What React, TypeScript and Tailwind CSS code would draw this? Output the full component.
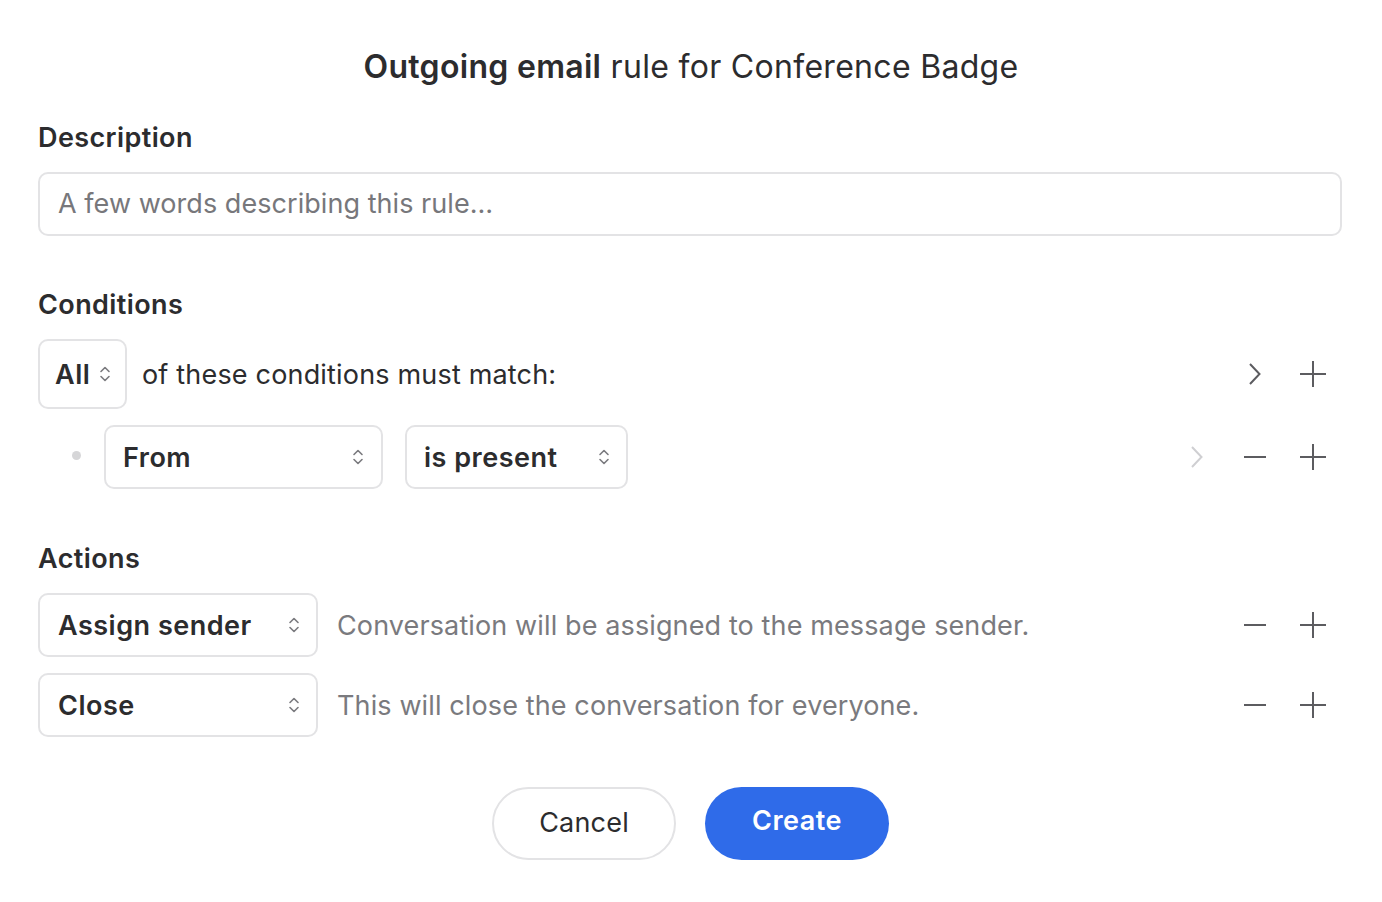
import React from "react";

const UpDown: React.FC = () => (
	<svg width="12" height="20" viewBox="0 0 12 20" fill="none" stroke="#7a7a7e" strokeWidth="1.6" strokeLinecap="round" strokeLinejoin="round">
		<path d="M2 7.5 L6 3.5 L10 7.5" />
		<path d="M2 12.5 L6 16.5 L10 12.5" />
	</svg>
);

const Chevron: React.FC<{ light?: boolean }> = ({ light }) => (
	<svg width="16" height="24" viewBox="0 0 16 24" fill="none" stroke={light ? "#cfcfd2" : "#5c5c60"} strokeWidth="2">
		<path d="M3 2 L12.5 12 L3 22" />
	</svg>
);

const Plus: React.FC = () => (
	<svg width="26" height="26" viewBox="0 0 26 26" fill="none" stroke="#5c5c60" strokeWidth="2">
		<path d="M0 13 H26 M13 0 V26" />
	</svg>
);

const Minus: React.FC = () => (
	<svg width="24" height="4" viewBox="0 0 24 4" fill="none" stroke="#5c5c60" strokeWidth="2">
		<path d="M1 2 H23" />
	</svg>
);

const Cell: React.FC<{ children?: React.ReactNode }> = ({ children }) => (
	<div className="w-[58px] flex items-center justify-center">{children}</div>
);

const Select: React.FC<{ label: string; className: string }> = ({ label, className }) => (
	<div
		className={`flex items-center justify-between border-2 border-[#e3e3e5] rounded-[10px] font-semibold text-[27px] tracking-[0.5px] text-[#2c2c2e] ${className}`}
	>
		<span className="pt-[3px]">{label}</span>
		<UpDown />
	</div>
);

export default function App() {
	return (
		<div
			className="w-[1382px] h-[902px] bg-white pl-[38px] pr-[40px] pt-[48px] text-[#2c2c2e]"
			style={{ fontFamily: "Inter, 'Noto Sans', sans-serif" }}
		>
			<h1 className="text-center text-[32px] leading-[38px] tracking-[0.3px] pl-[2px]">
				<span className="font-semibold">Outgoing email</span> rule for Conference Badge
			</h1>

			<div className="mt-[36px] text-[27px] leading-[32px] tracking-[0.4px] font-semibold">Description</div>
			<div className="mt-[18px] h-[64px] border-2 border-[#e3e3e5] rounded-[10px] flex items-center px-[18px] pt-[1px] text-[27px] tracking-[0.05px] text-[#77777b]">
				A few words describing this rule…
			</div>

			<div className="mt-[53px] text-[27px] leading-[32px] tracking-[0.4px] font-semibold">Conditions</div>
			<div className="mt-[18px] h-[70px] flex items-center">
				<Select label="All" className="h-[70px] w-[89px] pl-[15px] pr-[14px]" />
				<span className="ml-[15px] pt-[2px] text-[27px] tracking-[0.18px] flex-1">of these conditions must match:</span>
				<Cell>
					<Chevron />
				</Cell>
				<Cell>
					<Plus />
				</Cell>
			</div>
			<div className="mt-[16px] h-[64px] flex items-center">
				<div className="w-[66px] flex pl-[34px] -mt-[4px]">
					<div className="w-[9px] h-[9px] rounded-full bg-[#d6d6d8]" />
				</div>
				<Select label="From" className="h-[64px] w-[279px] pl-[17px] pr-[17px]" />
				<Select label="is present" className="ml-[22px] h-[64px] w-[223px] pl-[17px] pr-[16px]" />
				<div className="flex-1" />
				<Cell>
					<Chevron light />
				</Cell>
				<Cell>
					<Minus />
				</Cell>
				<Cell>
					<Plus />
				</Cell>
			</div>

			<div className="mt-[54px] text-[27px] leading-[32px] tracking-[0.4px] font-semibold">Actions</div>
			<div className="mt-[18px] h-[64px] flex items-center">
				<Select label="Assign sender" className="h-[64px] w-[280px] pl-[18px] pr-[16px]" />
				<span className="ml-[19px] pt-[2px] flex-1 text-[27px] tracking-[0.12px] text-[#7a7a7e]">
					Conversation will be assigned to the message sender.
				</span>
				<Cell>
					<Minus />
				</Cell>
				<Cell>
					<Plus />
				</Cell>
			</div>
			<div className="mt-[16px] h-[64px] flex items-center">
				<Select label="Close" className="h-[64px] w-[280px] pl-[18px] pr-[16px]" />
				<span className="ml-[19px] pt-[2px] flex-1 text-[27px] tracking-[0.12px] text-[#7a7a7e]">
					This will close the conversation for everyone.
				</span>
				<Cell>
					<Minus />
				</Cell>
				<Cell>
					<Plus />
				</Cell>
			</div>

			<div className="mt-[50px] flex justify-center gap-[29px] pl-[1px]">
				<button className="w-[184px] h-[73px] rounded-full border-2 border-[#e3e3e5] text-[27px] tracking-[0.2px] text-[#2c2c2e] bg-white">
					Cancel
				</button>
				<button className="w-[184px] h-[73px] rounded-full bg-[#2f6be9] text-[27px] tracking-[0.5px] font-semibold text-white pb-[4px]">
					Create
				</button>
			</div>
		</div>
	);
}
